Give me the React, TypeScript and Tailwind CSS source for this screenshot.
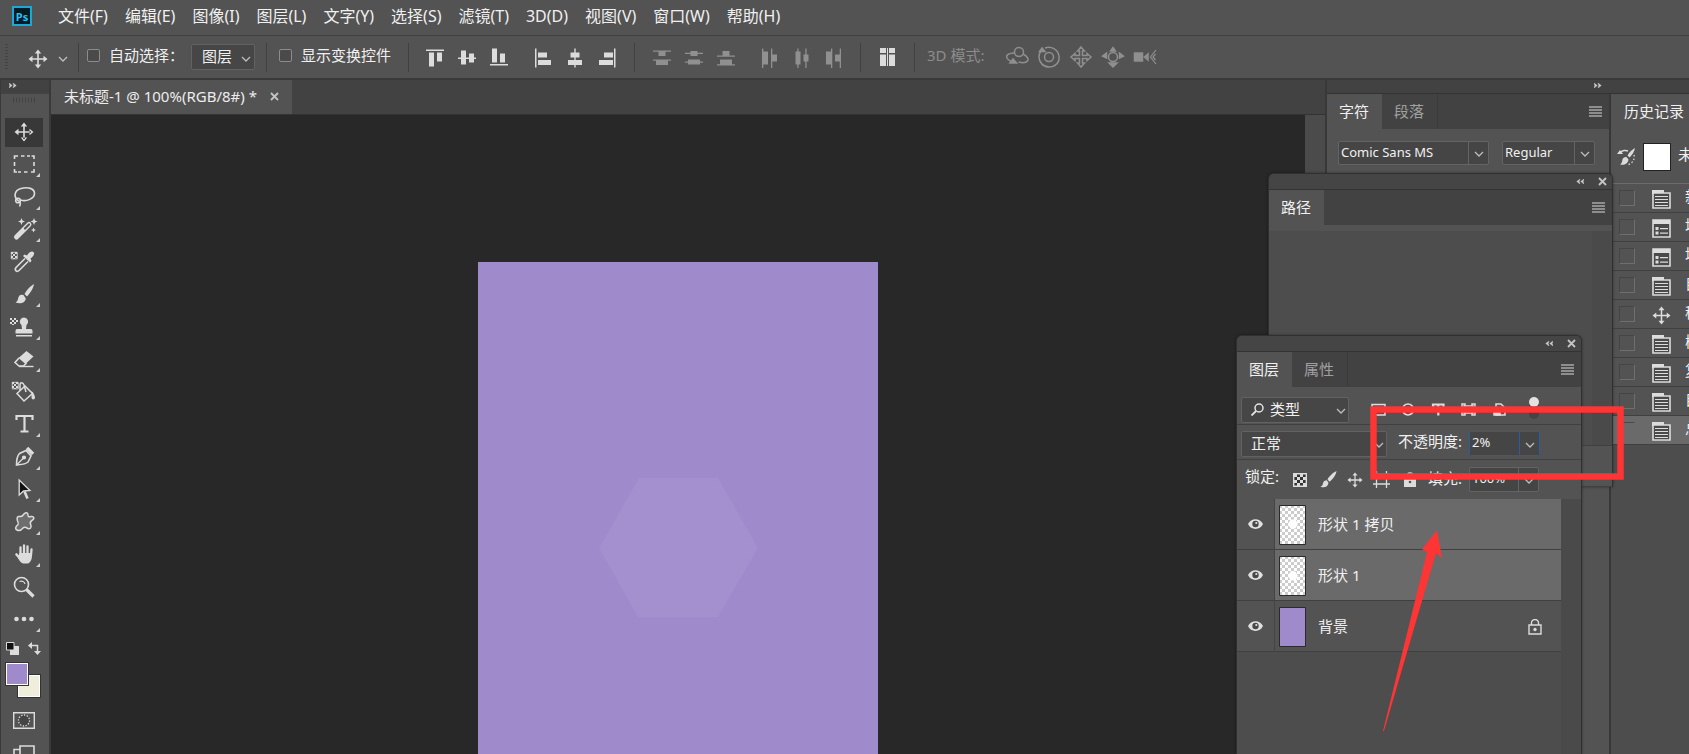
import React from "react";
import clsx from "clsx";

const FONT = "font-['Noto_Sans','Noto_Sans_CJK_SC',sans-serif]";

const menus = [
  "文件(F)",
  "编辑(E)",
  "图像(I)",
  "图层(L)",
  "文字(Y)",
  "选择(S)",
  "滤镜(T)",
  "3D(D)",
  "视图(V)",
  "窗口(W)",
  "帮助(H)",
];

/* ---------- shared icons ---------- */

function Chevron() {
  return (
    <svg width="10" height="8" viewBox="0 0 10 8" className="shrink-0">
      <path d="M1 2l4 4 4-4" fill="none" stroke="#bdbdbd" strokeWidth="1.3" />
    </svg>
  );
}

function DoubleArrow({ left = false }: { left?: boolean }) {
  return (
    <svg width="8" height="5" viewBox="0 0 8 5" className={clsx(left && "rotate-180")}>
      <path d="M0 0l3.300 2.500L0 5l.8-2.500zM4 0l3.300 2.500L4 5l.8-2.500z" fill="#d0d0d0" stroke="#d0d0d0" strokeWidth=".4" />
    </svg>
  );
}

function Cross({ size = 9 }: { size?: number }) {
  return (
    <svg width={size} height={size} viewBox="0 0 9 9">
      <path d="M1 1l7 7M8 1L1 8" stroke="#c4c4c4" strokeWidth="1.8" />
    </svg>
  );
}

function MoveIcon({ size = 20 }: { size?: number }) {
  return (
    <svg width={size} height={size} viewBox="0 0 20 20" fill="#dcdcdc">
      <path d="M9.2 3.5h1.6v13H9.2z M3.5 9.2h13v1.6h-13z" />
      <path d="M10 .5l3.2 4H6.8z M10 19.5l3.2-4H6.8z M.5 10l4-3.2v6.4z M19.5 10l-4-3.2v6.4z" />
    </svg>
  );
}

function PanelMenu() {
  return (
    <button aria-label="面板菜单">
      <svg width="13" height="11" viewBox="0 0 13 11">
        <path d="M0 1h13M0 4h13M0 7h13M0 10h13" stroke="#a8a8a8" strokeWidth="1.6" />
      </svg>
    </button>
  );
}

function Checker({ x, y }: { x: number; y: number }) {
  return (
    <g transform={`translate(${x} ${y})`}>
      <path d="M0 0h2v2H0zM4 0h2v2H4zM2 2h2v2H2zM0 4h2v2H0zM4 4h2v2H4zM2 6h2v1H2z" fill="#dcdcdc" />
      <path d="M.3 .3h6v6.6h-6z" fill="none" stroke="#dcdcdc" strokeWidth=".8" />
    </g>
  );
}

/* ---------- toolbox ---------- */

const tools: { name: string; more?: boolean; icon: React.ReactNode }[] = [
  {
    name: "移动工具",
    icon: (
      <path
        d="M11.2 5h1.6v14h-1.6zM5 11.2h14v1.6H5zM12 2.5l3.2 4H8.8zM12 21.5l3.2-4H8.8zM2.5 12l4-3.2v6.4zM21.5 12l-4-3.2v6.4z"
        fill="#dcdcdc"
      />
    ),
  },
  {
    name: "选框工具",
    more: true,
    icon: (
      <path
        d="M2.5 7V4H6M9 4h3.5M15 4h3M19.500 4H22v3M22 10v4M22 17v3h-3M15.500 20H12M9 20H6M5 20H2.500v-3M2.500 14v-4"
        stroke="#dcdcdc"
        strokeWidth="1.6"
        fill="none"
      />
    ),
  },
  {
    name: "套索工具",
    more: true,
    icon: (
      <g fill="none" stroke="#dcdcdc" strokeWidth="1.6">
        <path d="M6 15.500C1.500 12 2 5.500 9 3.500s13.500 0 13.500 5-8 8.500-14 6.500" />
        <circle cx="6" cy="15.500" r="2.300" />
        <path d="M6 15.500c2.500 1 3 3 1.500 6" />
      </g>
    ),
  },
  {
    name: "魔棒工具",
    more: true,
    icon: (
      <g>
        <path d="M4.500 20L17 7.500" stroke="#dcdcdc" strokeWidth="5" strokeLinecap="round" />
        <path d="M13 11.500l4-4" stroke="#535353" strokeWidth="2.200" strokeLinecap="round" />
        <path
          d="M9.500 1l1 2.500 2.500 1-2.500 1-1 2.500-1-2.500-2.500-1 2.500-1zM22 1l1 2.500 2.500 1-2.500 1-1 2.500-1-2.500-2.500-1 2.500-1zM21.500 10.500l.7 1.800 1.800.7-1.800.7-.7 1.800-.7-1.800-1.800-.7 1.800-.7z"
          fill="#dcdcdc"
        />
      </g>
    ),
  },
  {
    name: "吸管工具",
    icon: (
      <g>
        <Checker x={-1} y={2} />
        <path d="M13 8.500L4 17.500c-2 3 1 5 3 3l9-9" fill="none" stroke="#dcdcdc" strokeWidth="1.600" />
        <path d="M11 6l1.500-1.500 2.500 1C17 2 20 .5 21.500 2s0 4.500-3 6.500l1 2.500-1.500 1.500z" fill="#dcdcdc" />
      </g>
    ),
  },
  {
    name: "画笔工具",
    more: true,
    icon: (
      <path
        d="M22 2c-3 1.500-7.500 6-9.500 10l2.500 2.500C18 11.500 21.500 6 22 2zM11.500 13c-4-1-5 1.500-5.500 4-.3 2-1.500 3-2.500 3.500 4 1.500 9.500 1 10.300-4z"
        fill="#dcdcdc"
      />
    ),
  },
  {
    name: "仿制图章工具",
    more: true,
    icon: (
      <g fill="#dcdcdc">
        <path d="M-2 3h2v2h-2zM2 3h2v2H2zM0 5h2v2H0zM4 5h2v2H4zM-2 7h2v2h-2zM2 7h2v2H2zM0 9h2v1H0z" />
        <path d="M12 2.500a4.200 4.200 0 0 1 2.500 7.500l-.5 4h5c1 0 1.500 1 1.500 2v2.500h-17V16c0-1 .5-2 1.500-2h5l-.5-4A4.200 4.200 0 0 1 12 2.500z" />
        <path d="M4 20h16v1.500H4z" />
      </g>
    ),
  },
  {
    name: "橡皮擦工具",
    more: true,
    icon: (
      <g>
        <path d="M14.500 4l7 5.500-8 7.500-7-6z" fill="#dcdcdc" />
        <path d="M7 11l-4 4.500 4 3.500h4.500l3-3" fill="none" stroke="#dcdcdc" strokeWidth="1.600" />
        <path d="M7 19.500h14.500" stroke="#dcdcdc" strokeWidth="1.400" />
      </g>
    ),
  },
  {
    name: "油漆桶工具",
    icon: (
      <g>
        <Checker x={0} y={2} />
        <path d="M13 6l7.500 7.500-8.500 7.500-7-7.500z" fill="none" stroke="#dcdcdc" strokeWidth="1.500" />
        <path d="M8 11V5c0-3 3-3 4 0l2 7" fill="none" stroke="#dcdcdc" strokeWidth="1.500" />
        <path d="M19.500 11c2 2 3.500 4.500 3.500 6.500 0 2.500-3.500 2.500-3.500 0z" fill="#dcdcdc" />
      </g>
    ),
  },
  {
    name: "文字工具",
    more: true,
    icon: <path d="M4.500 8V4h16v4M12.500 4v15.500M8.500 19.500h8" fill="none" stroke="#dcdcdc" strokeWidth="2.200" />,
  },
  {
    name: "钢笔工具",
    more: true,
    icon: (
      <g fill="none" stroke="#dcdcdc" strokeWidth="1.600">
        <path d="M4.500 20c0-5 .5-9 3-11.500l6.500-3 5 5.500-3 6c-3 2.500-7 2.500-11.500 3z" />
        <path d="M4.500 20l7-7" strokeWidth="1.200" />
        <circle cx="12" cy="12.500" r="1.300" fill="#dcdcdc" />
        <path d="M15 3l6 6" strokeWidth="3.500" />
      </g>
    ),
  },
  {
    name: "路径选择工具",
    more: true,
    icon: (
      <g>
        <path d="M12.500 14.500l3 7" stroke="#dcdcdc" strokeWidth="2.600" />
        <path d="M7.200 3v15l4.300-4 6.500-.5z" fill="#111" stroke="#dcdcdc" strokeWidth="1.300" />
      </g>
    ),
  },
  {
    name: "自定形状工具",
    more: true,
    icon: (
      <path
        d="M12 4c1.500-2 4-1.500 4 1 0 2 1 2 3 1.500 3-.5 4 2 1.500 3.500-2 1.500-3 2-2 4 1.500 3 0 5.500-2.500 4.500-2-1-3.500-2-5-.5-2 2.500-4 3-6 2-2-1-1.500-3 0-4.500 2-1.500 1.500-2.500.5-4.500C4.500 7.500 5.500 6 7.500 6.500S11 5.500 12 4z"
        fill="#6e6e6e"
        stroke="#dcdcdc"
        strokeWidth="1.500"
      />
    ),
  },
  {
    name: "抓手工具",
    more: true,
    icon: (
      <g stroke="#dcdcdc" strokeLinecap="round" fill="none">
        <path d="M8.500 12V5.500M12 11V3.500M15.500 11V4.500M19 13l.5-5.500" strokeWidth="2.300" />
        <path d="M4.500 12.500l4 4.500" strokeWidth="2.600" />
        <path d="M7.500 11h12.500c.5 6-1.500 10-4.500 10.500H11c-2-.5-4-3-5-5.500z" fill="#dcdcdc" stroke="none" />
      </g>
    ),
  },
  {
    name: "缩放工具",
    icon: (
      <g fill="none" stroke="#dcdcdc">
        <circle cx="9.500" cy="9.500" r="7" strokeWidth="1.600" />
        <path d="M14.500 14.500l7 7" strokeWidth="3.200" />
        <path d="M7.500 6.500c2.500-1 5 0 5.500 2.500" strokeWidth="1.200" />
      </g>
    ),
  },
  {
    name: "编辑工具栏",
    more: true,
    icon: (
      <g fill="#dcdcdc">
        <circle cx="4.500" cy="12" r="2.300" />
        <circle cx="12" cy="12" r="2.300" />
        <circle cx="19.500" cy="12" r="2.300" />
      </g>
    ),
  },
];

function Toolbox() {
  return (
    <aside className="flex w-[51px] shrink-0 flex-col overflow-hidden border-l border-r-2 border-[#3a3a3a] bg-[#535353]">
      <button className="flex h-[14px] shrink-0 items-start bg-[#424242] pt-[3px] pl-2" aria-label="展开">
        <DoubleArrow />
      </button>
      <div className="flex h-[22px] shrink-0 justify-center pt-[3px]">
        <svg width="23" height="6" className="mr-px">
          <path d="M0 3h23" stroke="#434343" strokeWidth="5" strokeDasharray="1 2" />
        </svg>
      </div>
      <ul className="flex shrink-0 flex-col">
        {tools.map((tool, i) => (
          <li key={tool.name} className="flex h-8 items-center pl-1 even:mb-px">
            <button
              aria-label={tool.name}
              className={clsx("relative flex h-[29px] w-[38px] items-center justify-center", i === 0 && "bg-[#383838]")}
            >
              <svg width="28" height="24" viewBox="-2 0 28 24">
                {tool.icon}
              </svg>
              {tool.more && (
                <svg width="4" height="4" className="absolute right-[3px] bottom-[2px]">
                  <path d="M4 0v4H0z" fill="#cfcfcf" />
                </svg>
              )}
            </button>
          </li>
        ))}
      </ul>
      <div className="mt-[6px] flex h-5 shrink-0 items-start gap-[9px] pl-[5px]">
        <button aria-label="默认前景色和背景色">
          <svg width="13" height="13" viewBox="0 0 13 13">
            <path d="M4 4h9v9H4z" fill="#dcdcdc" />
            <path d="M.5 .5h7.500v7.500H.5z" fill="#111" stroke="#dcdcdc" />
          </svg>
        </button>
        <button aria-label="切换前景色和背景色">
          <svg width="13" height="13" viewBox="0 0 13 13">
            <path d="M3 3.500h6.500V10" fill="none" stroke="#dcdcdc" strokeWidth="1.500" />
            <path d="M0 3.500L4 0v7zM9.500 13L6 9h7z" fill="#dcdcdc" />
          </svg>
        </button>
      </div>
      <div className="relative ml-1 h-9 w-9 shrink-0">
        <button
          aria-label="背景色"
          className="absolute right-0 bottom-0 size-6 border border-[#333] bg-[#efeeda] outline-1 -outline-offset-2 outline-white"
        />
        <button
          aria-label="前景色"
          className="absolute top-0 left-0 size-6 border border-[#333] bg-[#9f8acc] outline-1 -outline-offset-2 outline-white"
        />
      </div>
      <button className="mt-[14px] ml-3 w-[22px] shrink-0" aria-label="快速蒙版">
        <svg width="22" height="17" viewBox="0 0 22 17" fill="none" stroke="#dcdcdc">
          <path d="M.7 .7h20.600v15.600H.7z" strokeWidth="1.400" />
          <circle cx="11" cy="8.500" r="5.500" fill="#444" strokeWidth="1.300" strokeDasharray="1.300 1.500" />
        </svg>
      </button>
      <button className="mt-4 ml-3 w-[22px] shrink-0" aria-label="屏幕模式">
        <svg width="22" height="17" viewBox="0 0 22 17" fill="none" stroke="#dcdcdc" strokeWidth="1.600">
          <path d="M7 1h14v12H7z" />
          <path d="M7 4.500H1V16h14v-3" />
        </svg>
      </button>
    </aside>
  );
}

/* ---------- options bar ---------- */

const alignIcons = [
  ["顶对齐", "M1 0h18v1.500H1zM4 3h5v14H4zM12 3h5v9h-5z"],
  ["垂直居中对齐", "M1 8h18v1.500H1zM4 1h5v14H4zM12 4h5v9h-5z"],
  ["底对齐", "M1 14.500h18V16H1zM3 -1h5v14H3zM11 4h5v9h-5z"],
];
const alignIcons2 = [
  ["左对齐", "M2 -1h1.500v19H2zM5 3h9v5H5zM5 10.500h13v5H5z"],
  ["水平居中对齐", "M9.300 -1h1.400v19H9.300zM5.500 3h9v5h-9zM3 10.500h14v5H3z"],
  ["右对齐", "M17 -1h1.500v19H17zM7 3h9v5H7zM2 10.500h14v5H2z"],
];
const spreadIcons = [
  ["按顶分布", "M1 1h18v1.300H1zM1 10h18v1.300H1zM6.500 2h7v4.500h-7zM4 11h12v4.500H4z"],
  ["垂直居中分布", "M1 3.300h18v1.300H1zM1 12h18v1.300H1zM6.500 1.500h7v5h-7zM4 10h12v5H4z"],
  ["按底分布", "M1 6h18v1.300H1zM1 14.700h18V16H1zM6.500 1.500h7v5h-7zM4 10h12v5H4z"],
];
const spreadIcons2 = [
  ["按左分布", "M2 -1h1.300v20H2zM11 -1h1.300v20H11zM3 2h5v13H3zM12 5h5v7h-5z"],
  ["水平居中分布", "M5.300 -1h1.300v20H5.300zM13.300 -1h1.300v20h-1.300zM3.500 2h5v13h-5zM11.500 5h5v7h-5z"],
  ["按右分布", "M7 -1h1.300v20H7zM15.700 -1H17v20h-1.300zM2 2h5.500v13H2zM11 5h5v7h-5z"],
];

function IconRow({ items, dim }: { items: string[][]; dim?: boolean }) {
  return (
    <div className="flex gap-3">
      {items.map(([name, d]) => (
        <button key={name} aria-label={name} disabled={dim}>
          <svg width="20" height="20" viewBox="0 -1.500 20 20" fill={dim ? "#909090" : "#dcdcdc"}>
            <path d={d} />
          </svg>
        </button>
      ))}
    </div>
  );
}

function Separator({ className }: { className?: string }) {
  return <div className={clsx("h-[29px] w-px shrink-0 bg-[#404040]", className)} />;
}

function OptionCheck({ id, label, className }: { id: string; label: string; className?: string }) {
  return (
    <div className={clsx("flex items-center gap-[9px]", className)}>
      <input
        id={id}
        type="checkbox"
        className="size-[13px] appearance-none rounded-xs border border-[#8c8c8c] bg-[#4a4a4a]"
      />
      <label htmlFor={id}>{label}</label>
    </div>
  );
}

const modes3d: [string, React.ReactNode][] = [
  [
    "旋转 3D 对象",
    <>
      <circle cx="14" cy="7" r="4.500" />
      <path d="M9 8C4 8 .5 10 2 13c.7 1.500 2 2.500 4 3.500M18 9c4 2 6 5 4.500 7s-5 2-9 1" />
      <path d="M5 18l3-4 3.500 4z" fill="#8f8f8f" />
    </>,
  ],
  [
    "滚动 3D 对象",
    <>
      <circle cx="12" cy="12" r="4.500" />
      <path d="M8 3c6-2.500 13 1.500 14 8s-4 11-10 11S2 17 2 12c0-2 .5-4 2-6" />
      <path d="M2.500 6.500L5 3l3 3.500z" fill="#8f8f8f" />
    </>,
  ],
  [
    "拖动 3D 对象",
    <path d="M12 2l3.500 4h-2v4.500H18v-2l4 3.500-4 3.500v-2h-4.500V18h2L12 22l-3.500-4h2v-4.500H6v2L2 12l4-3.500v2h4.500V6h-2z" />,
  ],
  [
    "滑动 3D 对象",
    <>
      <circle cx="12" cy="12" r="4.500" />
      <path d="M12 2.500l2.500 3.500h-5zM12 22l4-4H8zM1.500 11l4-3v5zM22.500 11l-4-3v5z" fill="#8f8f8f" />
    </>,
  ],
  [
    "缩放 3D 相机",
    <>
      <path d="M1.500 8h8v8h-8zM11.500 12L15 9v6z" fill="#8f8f8f" />
      <path d="M23 5l-5.500 7 5.500 7M22.500 9L20 12l2.500 3" strokeWidth="1.200" />
    </>,
  ],
];

function OptionsBar() {
  return (
    <div className="flex h-11 shrink-0 items-center border-b-2 border-[#3a3a3a] bg-[#535353] pl-[5px] text-[15px] whitespace-nowrap text-[#f0f0f0]">
      <svg width="3" height="26" className="shrink-0">
        <path d="M1.500 0v26" stroke="#434343" strokeWidth="3" strokeDasharray="1 2" />
      </svg>
      <div className="ml-5 flex items-center gap-[10px] pt-1">
        <MoveIcon />
        <Chevron />
      </div>
      <Separator className="ml-[10px]" />
      <OptionCheck id="auto-select" label="自动选择：" className="ml-2 pb-[3px]" />
      <div className="relative ml-[7px] flex items-center">
        <select
          aria-label="自动选择对象"
          className="h-[26px] w-16 appearance-none rounded-xs border border-[#626262] bg-[#464646] pb-[2px] pl-[10px]"
        >
          <option>图层</option>
        </select>
        <span className="pointer-events-none absolute inset-y-0 right-1 flex items-center pt-1">
          <Chevron />
        </span>
      </div>
      <Separator className="ml-[11px]" />
      <OptionCheck id="show-transform" label="显示变换控件" className="ml-3 pb-[3px]" />
      <Separator className="ml-[17px]" />
      <div className="ml-4 flex gap-6 pt-px">
        <IconRow items={alignIcons} />
        <IconRow items={alignIcons2} />
      </div>
      <Separator className="ml-[17px]" />
      <div className="ml-[17px] flex gap-6 pt-px">
        <IconRow items={spreadIcons} dim />
        <IconRow items={spreadIcons2} dim />
      </div>
      <Separator className="ml-4" />
      <button className="ml-[19px]" aria-label="自动对齐图层">
        <svg width="15" height="18" viewBox="0 0 15 18" fill="#dcdcdc">
          <path d="M0 0h6v5H0zM0 6.500h6V18H0zM9 0h6v5H9zM9 6.500h6V18H9zM7 0h1v18H7z" />
        </svg>
      </button>
      <Separator className="ml-[19px]" />
      <span className="ml-3 pb-[3px] text-[#8c8c8c]">3D 模式:</span>
      <div className="ml-[21px] flex gap-2">
        {modes3d.map(([name, icon]) => (
          <button key={name} aria-label={name} disabled>
            <svg width="24" height="24" viewBox="0 0 24 24" fill="none" stroke="#8f8f8f" strokeWidth="1.500">
              {icon}
            </svg>
          </button>
        ))}
      </div>
    </div>
  );
}

/* ---------- panels ---------- */

function PanelTabs({ tabs }: { tabs: string[] }) {
  return (
    <div className="flex h-[35px] shrink-0 items-stretch bg-[#424242] text-[15px]">
      {tabs.map((tab, i) => (
        <button
          key={tab}
          className={clsx(
            "pr-[13px] pb-px pl-3 whitespace-nowrap",
            i === 0 ? "bg-[#535353] text-[#f0f0f0]" : "border-r border-[#3b3b3b] text-[#a0a0a0]"
          )}
        >
          {tab}
        </button>
      ))}
      <div className="ml-auto flex items-center pr-[7px]">
        <PanelMenu />
      </div>
    </div>
  );
}

function FloatingPanel({
  className,
  tabs,
  children,
}: {
  className: string;
  tabs: string[];
  children: React.ReactNode;
}) {
  return (
    <section
      className={clsx(
        "absolute flex flex-col overflow-hidden rounded-t-md border border-b-0 border-[#303030] bg-[#4d4d4d] shadow-[0_0_3px_#0006]",
        className
      )}
    >
      <div className="flex h-4 shrink-0 items-center justify-end gap-[14px] border-b border-[#333] bg-[#454545] pr-[5px]">
        <button aria-label="折叠">
          <DoubleArrow left />
        </button>
        <button aria-label="关闭">
          <Cross />
        </button>
      </div>
      <PanelTabs tabs={tabs} />
      {children}
    </section>
  );
}

function ComboBox({
  label,
  value,
  active,
  className,
}: {
  label: string;
  value: string;
  active?: boolean;
  className?: string;
}) {
  const line = active ? "border-[#2b5c9f]" : "border-[#646464]";
  return (
    <div className={clsx("flex rounded-xs border bg-[#454545] text-[13px] text-[#f0f0f0]", line, className)}>
      <input
        id={label}
        aria-label={label}
        defaultValue={value}
        className="w-full min-w-0 bg-transparent pb-px pl-[2px] outline-none"
      />
      <button aria-label={`${label}选项`} className={clsx("flex w-5 shrink-0 items-center justify-center border-l pt-[2px]", line)}>
        <Chevron />
      </button>
    </div>
  );
}

function CharacterPanel() {
  return (
    <section className="flex w-[284px] shrink-0 flex-col border-r-2 border-[#383838] bg-[#535353]">
      <PanelTabs tabs={["字符", "段落"]} />
      <div className="flex gap-[13px] py-3 pl-[11px]">
        <ComboBox label="字体" value="Comic Sans MS" className="h-6 w-[151px]" />
        <ComboBox label="字体样式" value="Regular" className="h-6 w-[93px]" />
      </div>
    </section>
  );
}

const history = [
  { icon: "doc", text: "新建" },
  { icon: "dialog", text: "填充" },
  { icon: "dialog", text: "填充" },
  { icon: "doc", text: "自由变换" },
  { icon: "move", text: "移动" },
  { icon: "doc", text: "栅格化图层" },
  { icon: "doc", text: "复制图层" },
  { icon: "doc", text: "自由变换" },
  { icon: "doc", text: "总体不透明度更改" },
];

function HistoryIcon({ icon }: { icon: string }) {
  if (icon === "move") return <MoveIcon size={19} />;
  return (
    <svg width="19" height="19" viewBox="0 0 19 19" className="shrink-0">
      {icon === "doc" ? (
        <>
          <path d="M0 0h12v4H0z" fill="#dcdcdc" />
          <path d="M1 3h17v15H1z" fill="#4a4a4a" stroke="#dcdcdc" strokeWidth="1.600" />
          <path d="M3 6.500h13M3 9.500h13M3 12.500h13M3 15.500h13" stroke="#dcdcdc" strokeWidth="1.200" />
        </>
      ) : (
        <>
          <path d="M1 1h17v17H1z" fill="#4a4a4a" stroke="#dcdcdc" strokeWidth="1.600" />
          <path d="M1 1h17v4H1z" fill="#dcdcdc" />
          <path d="M3.500 8h3v3h-3zM3.500 12.500h3v3h-3zM8 9h8v1.300H8zM8 13.500h8v1.300H8z" fill="#dcdcdc" />
        </>
      )}
    </svg>
  );
}

function HistoryPanel() {
  return (
    <section className="flex min-w-0 flex-1 flex-col overflow-hidden bg-[#4d4d4d] text-[15px] text-[#f0f0f0]">
      <div className="flex h-[35px] shrink-0 items-center bg-[#535353] pb-px pl-[13px] whitespace-nowrap">历史记录</div>
      <div className="flex h-[55px] shrink-0 items-center gap-[7px] border-b border-[#6c6c6c] bg-[#535353] pt-[2px] pl-[6px] whitespace-nowrap">
        <svg width="19" height="18" viewBox="0 0 19 18" className="shrink-0">
          <path
            d="M18 0c-3 1.500-6 4.500-7.500 7.500l2 2C15 7 17.500 3.500 18 0zM9.500 9c-3 0-4 1.500-4.200 3.500C5.200 14.500 4 16 3 16.500c4 1 8-.5 8.500-5z"
            fill="#dcdcdc"
          />
          <path d="M3 5c2-3 6-3 8-2" fill="none" stroke="#dcdcdc" strokeWidth="1.500" />
          <path d="M0 6l3-4 3 4z" fill="#dcdcdc" />
          <path d="M17 7c1 5-2 9-7 10" fill="none" stroke="#dcdcdc" strokeWidth="1.300" strokeDasharray="1.500 2" />
        </svg>
        <div className="size-7 shrink-0 border border-[#222] bg-white" />
        <span className="pb-[6px]">未标题-1</span>
      </div>
      <ul>
        {history.map((step, i) => {
          const current = i === history.length - 1;
          return (
            <li
              key={i}
              className={clsx(
                "flex h-[29px] items-center border-b border-[#404040] pl-2 whitespace-nowrap",
                current ? "bg-[#6a6a6a]" : "bg-[#535353]"
              )}
            >
              <span
                className={clsx(
                  "size-4 shrink-0 border",
                  current
                    ? "border-transparent border-t-[#4a4a4a]"
                    : "border-t-[#454545] border-r-[#6e6e6e] border-b-[#6e6e6e] border-l-[#454545]"
                )}
              />
              <span className="ml-[17px] flex pt-[3px]">
                <HistoryIcon icon={step.icon} />
              </span>
              <span className="ml-[14px] pb-1">{step.text}</span>
            </li>
          );
        })}
      </ul>
    </section>
  );
}

function PathsPanel() {
  return (
    <FloatingPanel className="top-[173px] right-[76px] h-[314px] w-[345px]" tabs={["路径"]}>
      <div className="h-[6px] shrink-0 bg-[#535353]" />
      <div className="flex flex-1 justify-end">
        <div className="w-5 bg-[#4a4a4a]" />
      </div>
      <div className="h-[42px] shrink-0 border-y border-[#404040] bg-[#535353]" />
    </FloatingPanel>
  );
}

function FilterRow() {
  return (
    <div className="flex h-[38px] shrink-0 items-center border-b border-[#404040] bg-[#535353] pl-1">
      <div className="relative mt-2 flex items-center">
        <svg width="13" height="13" viewBox="0 0 13 13" className="pointer-events-none absolute left-[10px]">
          <circle cx="8" cy="5" r="4" fill="none" stroke="#e4e4e4" strokeWidth="1.500" />
          <path d="M5 8l-4.500 4.500" stroke="#e4e4e4" strokeWidth="1.800" />
        </svg>
        <select
          aria-label="图层过滤"
          className="h-[26px] w-[108px] appearance-none rounded-xs border border-[#626262] bg-[#464646] pb-1 pl-7 text-[#f0f0f0]"
        >
          <option>类型</option>
        </select>
        <span className="pointer-events-none absolute inset-y-0 right-[3px] flex items-center pt-[2px]">
          <Chevron />
        </span>
      </div>
      <svg width="166" height="22" viewBox="0 0 166 22" className="mt-2 ml-5" fill="none" stroke="#dcdcdc" strokeWidth="1.500">
        <path d="M3 5.500h13v10.500H3z" />
        <circle cx="39" cy="10.500" r="5.500" />
        <path d="M64 8.500V5.500h10.500v3M69.300 5.500v11" strokeWidth="2.200" />
        <path d="M95 7h9v7h-9z" />
        <path d="M93 5h3v3h-3zM103 5h3v3h-3zM93 13h3v3h-3zM103 13h3v3h-3z" />
        <path d="M127 5h5l4 4v7h-9z" />
        <path d="M125 11h6v5h-6z" fill="#dcdcdc" />
      </svg>
      <button aria-label="打开或关闭图层过滤" className="mt-1 -ml-[6px] flex h-[22px] w-[10px] rounded-full bg-[#444]">
        <span className="size-[10px] rounded-full bg-[#e2e2e2]" />
      </button>
    </div>
  );
}

function BlendRow() {
  return (
    <div className="flex h-[35px] shrink-0 items-center border-b border-[#404040] bg-[#535353] pl-1">
      <div className="relative mt-[3px] flex items-center">
        <select
          aria-label="混合模式"
          className="h-[26px] w-[146px] appearance-none rounded-xs border border-[#626262] bg-[#464646] pb-[2px] pl-[9px] text-[#f0f0f0]"
        >
          <option>正常</option>
        </select>
        <span className="pointer-events-none absolute inset-y-0 right-[3px] flex items-center pt-[2px]">
          <Chevron />
        </span>
      </div>
      <label htmlFor="不透明度" className="ml-[11px] w-[71px] pb-px">
        不透明度:
      </label>
      <ComboBox label="不透明度" value="2%" active className="mt-[3px] h-[25px] w-[71px]" />
    </div>
  );
}

function LockRow() {
  return (
    <div className="flex h-[39px] shrink-0 items-center bg-[#535353] pl-2">
      <span className="w-12 pb-[6px]">锁定:</span>
      <button aria-label="锁定透明像素">
        <svg width="14" height="14" viewBox="0 0 14 14">
          <path d="M.7 .7h12.600v12.600H.7z" fill="#333" stroke="#dcdcdc" strokeWidth="1.400" />
          <path d="M1 1h3v3H1zM7 1h3v3H7zM4 4h3v3H4zM10 4h3v3h-3zM1 7h3v3H1zM7 7h3v3H7zM4 10h3v3H4zM10 10h3v3h-3z" fill="#dcdcdc" />
        </svg>
      </button>
      <button aria-label="锁定图像像素" className="ml-[13px]">
        <svg width="17" height="17" viewBox="0 0 17 17">
          <path
            d="M16.500 0C13 1.500 9 5.500 7.500 8.500l2 2.200C13 8 16 4 16.500 0zM6.800 9.300c-3 .2-3.600 2-4 4-.2 1.200-1.300 2-2.300 2.500 3.500 1.200 7.500.5 8-4z"
            fill="#dcdcdc"
          />
        </svg>
      </button>
      <button aria-label="锁定位置" className="ml-[10px]">
        <MoveIcon size={16} />
      </button>
      <button aria-label="防止在画板内外自动嵌套" className="ml-[10px]">
        <svg width="17" height="17" viewBox="0 0 17 17" fill="none" stroke="#dcdcdc" strokeWidth="1.300">
          <path d="M0 3.500h17M0 13h17M3.500 0v17M13.500 0v17" />
        </svg>
      </button>
      <button aria-label="锁定全部" className="ml-[14px]">
        <svg width="12" height="15" viewBox="0 0 12 15">
          <path d="M3 7V4a3 3 0 0 1 6 0v3" fill="none" stroke="#dcdcdc" strokeWidth="1.600" />
          <path d="M0 6h12v9H0z" fill="#dcdcdc" />
          <circle cx="6" cy="10" r="1.300" fill="#535353" />
        </svg>
      </button>
      <label htmlFor="填充" className="ml-3 w-[41px] pb-[3px]">
        填充:
      </label>
      <ComboBox label="填充" value="100%" className="h-[25px] w-[70px]" />
    </div>
  );
}

const layers = [
  { name: "形状 1 拷贝", selected: true, y: 19 },
  { name: "形状 1", selected: true, y: 20 },
  { name: "背景", selected: false, y: 0 },
];

function LayerThumb({ y }: { y: number }) {
  return (
    <svg width="27" height="40" viewBox="0 0 27 40" className="shrink-0">
      <defs>
        <pattern id="alpha" width="6" height="6" patternUnits="userSpaceOnUse">
          <path d="M0 0h6v6H0z" fill="#fff" />
          <path d="M0 0h3v3H0zM3 3h3v3H3z" fill="#cccccc" />
        </pattern>
      </defs>
      <path d="M.5 .5h26v39H.5z" fill={y ? "url(#alpha)" : "#9f8acc"} stroke="#2b2b2b" />
      {y > 0 && <path d="M9 0l2.500-4.500h5L19 0l-2.500 4.500h-5z" transform={`translate(0 ${y})`} fill="#fff" />}
    </svg>
  );
}

function LayersPanel() {
  return (
    <FloatingPanel className="top-[335px] right-[107px] bottom-0 w-[346px]" tabs={["图层", "属性"]}>
      <div className="flex flex-1 flex-col text-[15px] text-[#f0f0f0]">
        <FilterRow />
        <BlendRow />
        <LockRow />
        <div className="flex flex-1">
          <ul className="flex-1">
            {layers.map((layer) => (
              <li key={layer.name} className="flex h-[51px] border-b border-[#404040] bg-[#535353]">
                <button className="flex w-[38px] items-center justify-center border-r border-[#444]" aria-label="可见性">
                  <svg width="15" height="10" viewBox="0 0 15 10">
                    <path d="M0 5c3-6.500 12-6.500 15 0-3 6.500-12 6.500-15 0z" fill="#e0e0e0" />
                    <circle cx="7.500" cy="5" r="3.200" fill="#484848" />
                    <circle cx="8.300" cy="4" r="1.100" fill="#e0e0e0" />
                  </svg>
                </button>
                <div className={clsx("flex flex-1 items-center pt-px pr-[19px] pl-1", layer.selected && "bg-[#6a6a6a]")}>
                  <LayerThumb y={layer.y} />
                  <span className="ml-3">{layer.name}</span>
                  {!layer.selected && (
                    <svg width="14" height="16" viewBox="0 0 14 16" className="ml-auto" fill="none" stroke="#dcdcdc">
                      <path d="M1 6h12v9H1z" strokeWidth="1.400" />
                      <path d="M3.500 6V4a3.500 3.500 0 0 1 7 0v2" strokeWidth="1.400" />
                      <circle cx="7" cy="10.500" r="1.300" fill="#dcdcdc" />
                    </svg>
                  )}
                </div>
              </li>
            ))}
          </ul>
          <div className="w-5 bg-[#4a4a4a]" />
        </div>
      </div>
    </FloatingPanel>
  );
}

/* Red box around the opacity field and the arrow that points at it */
function Annotation() {
  return (
    <svg width="256" height="328" viewBox="0 0 256 328" className="pointer-events-none absolute top-[405px] right-[64px]">
      <path d="M4.500 4.500h247v67h-247z" fill="none" stroke="#fd3535" strokeWidth="6.500" />
      <path d="M68 125L53 144l5 3L14 326l1 0L67 148l6 5z" fill="#fd3535" />
    </svg>
  );
}

function Document() {
  return (
    <main className="flex min-w-0 flex-1 flex-col bg-[#424242]">
      <div className="flex h-[35px] shrink-0 border-b border-[#333] text-[15px] text-[#ececec]">
        <div className="flex items-center gap-[13px] bg-[#535353] px-[13px] pb-[2px] whitespace-nowrap">
          <span>未标题-1 @ 100%(RGB/8#) *</span>
          <button aria-label="关闭文档">
            <Cross />
          </button>
        </div>
      </div>
      <div className="flex min-h-0 flex-1">
        <div className="flex flex-1 justify-center overflow-hidden bg-[#282828] pt-[147px]">
          <div className="flex w-[400px] justify-center bg-[#9f8acc] pt-[216px]">
            <svg width="160" height="140" viewBox="0 0 160 140">
              <path d="M41 0h79l40 70-40 69H40L1 70z" fill="#a48fcf" />
            </svg>
          </div>
        </div>
        <div className="w-5 bg-[#4b4b4b]" />
      </div>
    </main>
  );
}

export default function App() {
  return (
    <div className={clsx("relative flex h-screen flex-col overflow-hidden bg-[#535353]", FONT)}>
      <header className="flex h-9 shrink-0 items-center border-b border-[#404040] bg-[#535353] pb-[3px] pl-3 text-base text-[#f0f0f0]">
        <div className="flex size-5 items-center justify-center border-2 border-[#1aa9d6] bg-[#001d27] text-[11px] leading-none font-bold text-[#27c2f0]">
          Ps
        </div>
        <nav className="ml-[26px] flex gap-[17px] whitespace-nowrap">
          {menus.map((m) => (
            <button key={m}>{m}</button>
          ))}
        </nav>
      </header>
      <OptionsBar />
      <div className="flex min-h-0 flex-1">
        <Toolbox />
        <Document />
        <div className="flex w-[364px] shrink-0 flex-col border-l-2 border-[#383838]">
          <div className="flex h-[14px] shrink-0 items-start border-b border-[#333] bg-[#424242] pt-[3px] pl-[267px]">
            <button aria-label="折叠为图标">
              <DoubleArrow />
            </button>
          </div>
          <div className="flex min-h-0 flex-1">
            <CharacterPanel />
            <HistoryPanel />
          </div>
        </div>
      </div>
      <PathsPanel />
      <LayersPanel />
      <Annotation />
    </div>
  );
}
